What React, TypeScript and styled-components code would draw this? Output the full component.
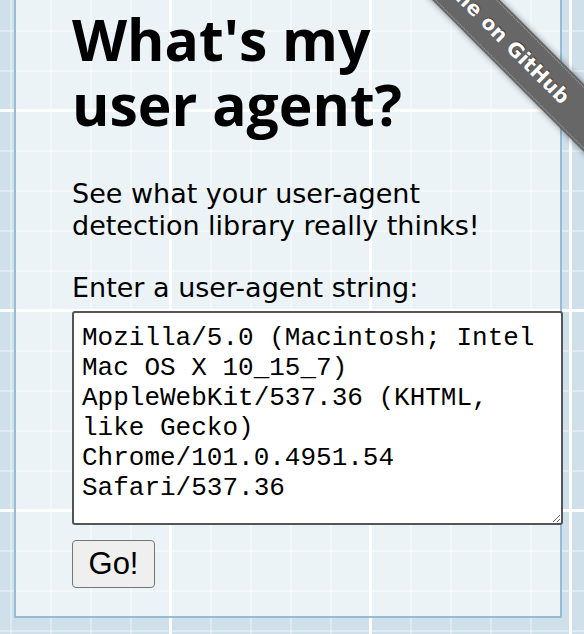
import styled, { createGlobalStyle } from 'styled-components';

const UA =
  'Mozilla/5.0 (Macintosh; Intel Mac OS X 10_15_7) AppleWebKit/537.36 (KHTML, like Gecko) Chrome/101.0.4951.54 Safari/537.36';

const GlobalStyle = createGlobalStyle`
  html, body {
    margin: 0;
    padding: 0;
  }
  body {
    min-height: 634px;
    background-color: #cfe0ea;
    background-image:
      linear-gradient(#ffffff 3px, transparent 3px),
      linear-gradient(90deg, #ffffff 3px, transparent 3px),
      linear-gradient(rgba(255, 255, 255, 0.35) 2px, transparent 2px),
      linear-gradient(90deg, rgba(255, 255, 255, 0.35) 2px, transparent 2px);
    background-size: 200px 200px, 200px 200px, 40px 40px, 40px 40px;
    background-position: 0 109px, 169px 0, 0 30px, 10px 0;
    font-family: 'DejaVu Sans', Verdana, sans-serif;
    color: #000;
  }
`;

const Page = styled.div`
  position: relative;
  width: 100%;
  min-height: 634px;
  overflow: hidden;
`;

const Panel = styled.main`
  margin-left: 14px;
  width: 548px;
  box-sizing: border-box;
  background: rgba(255, 255, 255, 0.6);
  border: 2px solid #97bcd6;
  border-top: none;
  padding: 7px 0 28px 56px;
`;

const Title = styled.h1`
  margin: 0;
  font-family: 'Open Sans', 'DejaVu Sans', sans-serif;
  font-size: 57px;
  line-height: 65px;
  font-weight: bold;
`;

const Text = styled.p<{ gap: number }>`
  margin: ${p => p.gap}px 0 0;
  font-size: 27px;
  line-height: 32px;
`;

const UaInput = styled.textarea`
  display: block;
  margin-top: 7px;
  width: 491px;
  height: 214px;
  box-sizing: border-box;
  padding: 10px 8px 6px;
  border: 2px solid #555555;
  border-radius: 3px;
  background: #ffffff;
  font-family: 'Liberation Mono', 'Courier New', monospace;
  font-size: 26px;
  line-height: 30px;
  color: #000;
  outline: none;
`;

const GoButton = styled.button`
  display: block;
  margin-top: 15px;
  width: 83px;
  height: 48px;
  padding: 0;
  background: #efefef;
  border: 1.5px solid #767676;
  border-radius: 4px;
  font-family: 'Liberation Sans', Arial, sans-serif;
  font-size: 31px;
  color: #000;
`;

const RibbonCorner = styled.div`
  position: absolute;
  top: 0;
  right: 0;
  width: 200px;
  height: 200px;
  overflow: hidden;
  pointer-events: none;
`;

const Ribbon = styled.a`
  position: absolute;
  left: -64px;
  top: 0;
  width: 340px;
  height: 48px;
  line-height: 48px;
  transform: rotate(45deg);
  background: #676767;
  box-shadow: 0 0 6px rgba(0, 0, 0, 0.45);
  color: #ffffff;
  text-align: center;
  text-decoration: none;
  font-family: 'DejaVu Sans', Verdana, sans-serif;
  font-weight: bold;
  font-size: 20px;
  letter-spacing: 0.3px;
  text-shadow: 0 -1px 1px rgba(0, 0, 0, 0.5);

  &::before,
  &::after {
    content: '';
    position: absolute;
    left: 0;
    right: 0;
    height: 0;
    border-top: 1px dotted rgba(255, 255, 255, 0.4);
  }
  &::before {
    top: 2px;
  }
  &::after {
    bottom: 2px;
  }
`;

export default function App() {
  return (
    <>
      <GlobalStyle />
      <Page>
        <Panel>
          <Title>
            What's my
            <br />
            user agent?
          </Title>
          <Text gap={41}>
            See what your user-agent
            <br />
            detection library really thinks!
          </Text>
          <Text gap={30}>Enter a user-agent string:</Text>
          <UaInput defaultValue={UA} spellCheck={false} />
          <GoButton>Go!</GoButton>
        </Panel>
        <RibbonCorner>
          <Ribbon href="#">Fork me on GitHub</Ribbon>
        </RibbonCorner>
      </Page>
    </>
  );
}
